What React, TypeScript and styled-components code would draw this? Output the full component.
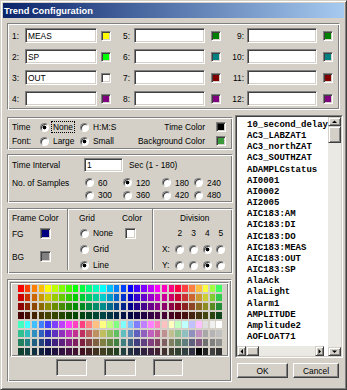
import React from "react";
import styled, { createGlobalStyle, css } from "styled-components";

const FACE = "#d4d0c8";
const SHADOW = "#808080";
const DARK = "#404040";
const LIGHT = "#ffffff";

const GlobalStyle = createGlobalStyle`
  *, *::before, *::after { box-sizing: border-box; }
  html, body { margin: 0; padding: 0; background: ${FACE}; }
  body {
    font-family: "Liberation Sans", Arial, sans-serif;
    font-size: 8.4px;
    color: #000;
  }
`;

const sunken = css`
  border: 1px solid;
  border-color: ${SHADOW} ${LIGHT} ${LIGHT} ${SHADOW};
  box-shadow: inset 1px 1px 0 ${DARK}, inset -1px -1px 0 ${FACE};
`;

const raised = css`
  border: 1px solid;
  border-color: ${FACE} ${DARK} ${DARK} ${FACE};
  box-shadow: inset 1px 1px 0 ${LIGHT}, inset -1px -1px 0 ${SHADOW};
  background: ${FACE};
`;

const etched = css`
  border: 1px solid;
  border-color: ${SHADOW} ${LIGHT} ${LIGHT} ${SHADOW};
  box-shadow: inset 1px 1px 0 ${LIGHT}, inset -1px -1px 0 ${SHADOW};
`;

const Window = styled.div`
  width: 347px;
  height: 390px;
  ${raised};
  padding: 2px;
  display: flex;
  flex-direction: column;
  overflow: hidden;
`;

const TitleBar = styled.div`
  height: 15px;
  flex: none;
  background: linear-gradient(to right, #0a246a, #a6caf0);
  color: #fff;
  font-weight: bold;
  font-size: 9.3px;
  display: flex;
  align-items: center;
  padding-left: 1px;
`;

const Body = styled.div`
  display: flex;
  flex-direction: column;
  padding: 5px 0 0 4px;
`;

/* ---------- channel group ---------- */
const ChannelGroup = styled.div`
  ${etched};
  width: 333px;
  padding: 4px 0 3px 1px;
  display: grid;
  grid-template-columns: 16px 72px 14px 23px 71px 16px 26px 70px 16px;
  grid-template-rows: repeat(4, 15px);
  row-gap: 6px;
`;

const ChLabel = styled.div<{ $left?: boolean; $pad: number }>`
  display: flex;
  align-items: center;
  justify-content: ${(p) => (p.$left ? "flex-start" : "flex-end")};
  padding-left: ${(p) => (p.$left ? p.$pad : 0)}px;
  padding-right: ${(p) => (p.$left ? 0 : p.$pad)}px;
`;

const TextField = styled.input<{ $w?: number }>`
  ${sunken};
  width: ${(p) => (p.$w ? `${p.$w}px` : "100%")};
  height: 100%;
  margin: 0;
  padding: 0 1px 0 2px;
  background: #fff;
  font: inherit;
  color: #000;
  outline: none;
`;

const SwatchCell = styled.div<{ $pl?: number }>`
  display: flex;
  align-items: center;
  justify-content: flex-end;
  padding-left: ${(p) => p.$pl ?? 0}px;
`;

const Swatch = styled.span<{ $c: string; $size?: number }>`
  display: block;
  flex: none;
  width: ${(p) => p.$size ?? 10}px;
  height: ${(p) => p.$size ?? 10}px;
  ${sunken};
  background: ${(p) => p.$c};
`;

/* ---------- lower area ---------- */
const Lower = styled.div`
  display: flex;
  gap: 2px;
  margin-top: 5px;
`;

const LeftCol = styled.div`
  width: 226px;
  display: flex;
  flex-direction: column;
  padding-top: 2px;
`;

const RightCol = styled.div`
  width: 108px;
  display: flex;
  flex-direction: column;
`;

const Text = styled.div<{ $pl?: number }>`
  display: flex;
  align-items: center;
  white-space: nowrap;
  padding-left: ${(p) => p.$pl ?? 0}px;
`;

const RightText = styled(Text)`
  justify-content: flex-end;
`;

const RadioOption = styled.div<{ $ml?: number }>`
  display: flex;
  align-items: center;
  gap: 4px;
  white-space: nowrap;
  margin-left: ${(p) => p.$ml ?? 0}px;
`;

const Radio = styled.span<{ $on?: boolean }>`
  display: block;
  flex: none;
  width: 9px;
  height: 9px;
  border-radius: 50%;
  border: 1px solid;
  border-color: ${SHADOW} ${LIGHT} ${LIGHT} ${SHADOW};
  box-shadow: inset 1px 1px 0 ${DARK};
  background: ${(p) =>
    p.$on ? "radial-gradient(circle at 50% 50%, #000 0 1.6px, #fff 2.2px)" : "#fff"};
`;

const Focus = styled.span`
  border: 1px dotted #000;
  padding: 0 1px;
  margin-left: -2px;
  line-height: 10px;
`;

const TimeGroup = styled.div`
  ${etched};
  height: 33px;
  padding: 2px 6px 0 4px;
  display: grid;
  grid-template-columns: 28px 40px 1fr auto 21px;
  grid-template-rows: 14px 14px;
`;

const IntervalGroup = styled.div`
  ${etched};
  height: 49px;
  margin-top: 4px;
  padding: 3px 0 0 4px;
  display: flex;
  flex-direction: column;
`;

const IntervalRow = styled.div<{ $h: number; $mb?: number }>`
  height: ${(p) => p.$h}px;
  margin-bottom: ${(p) => p.$mb ?? 0}px;
  display: grid;
  grid-template-columns: 72px 38px 39px 32px 1fr;
`;

const InputWithUnit = styled.div`
  grid-column: 2 / -1;
  display: flex;
  align-items: center;
  gap: 6px;
  height: 14px;
`;

const FrameGroup = styled.div`
  ${etched};
  height: 66px;
  margin-top: 5px;
  display: flex;
`;

const Section = styled.div<{ $w?: number; $sep?: boolean }>`
  ${(p) => (p.$w ? `width: ${p.$w}px;` : "flex: 1;")}
  margin-bottom: 3px;
  ${(p) =>
    p.$sep &&
    css`
      border-left: 1px solid ${SHADOW};
      box-shadow: inset 1px 0 0 ${LIGHT};
    `}
`;

const FrameSection = styled(Section)`
  display: flex;
  flex-direction: column;
  padding: 1px 0 0 4px;
`;

const SectionHead = styled(Text)`
  height: 15px;
`;

const FrameRow = styled.div<{ $mt: number }>`
  margin-top: ${(p) => p.$mt}px;
  height: 11px;
  display: grid;
  grid-template-columns: 28px 11px;
  align-items: center;
`;

const GridSection = styled(Section)`
  padding: 1px 0 0 11px;
  display: grid;
  grid-template-columns: 43px 1fr;
  grid-template-rows: 15px repeat(3, 16px);
`;

const DivisionSection = styled(Section)`
  padding-top: 1px;
  display: grid;
  grid-template-columns: 20px repeat(4, 13.7px);
  grid-template-rows: 15px repeat(3, 16px);
`;

const DivHead = styled(Text)`
  grid-column: 1 / -1;
  padding-left: 27px;
`;

const Center = styled.div`
  display: flex;
  align-items: center;
  justify-content: center;
`;

const PaletteGroup = styled.div`
  ${etched};
  width: 225px;
  height: 103px;
  margin-top: 5px;
  padding: 2px;
  display: flex;
  flex-direction: column;
`;

const PalettePanel = styled.div`
  ${etched};
  height: 75px;
  padding: 2px 0 0 7px;
`;

const PaletteGrid = styled.div`
  width: 205px;
  display: grid;
  grid-template-columns: repeat(30, 5.6px);
  grid-template-rows: repeat(8, 7px);
  column-gap: 1.25px;
  row-gap: 2px;
`;

const Cell = styled.span<{ $c: string }>`
  display: block;
  background: ${(p) => p.$c};
`;

const BoxRow = styled.div`
  display: flex;
  justify-content: center;
  gap: 17px;
  margin-top: 2px;
`;

const EmptyBox = styled.div<{ $w: number }>`
  ${sunken};
  width: ${(p) => p.$w}px;
  height: 17px;
`;

/* ---------- list box ---------- */
const ListOuter = styled.div`
  height: 243px;
  border: 1px solid;
  border-color: ${SHADOW} ${LIGHT} ${LIGHT} ${SHADOW};
  display: flex;
`;

const ListInner = styled.div`
  flex: 1;
  border: 1px solid;
  border-color: ${DARK} ${FACE} ${FACE} ${DARK};
  display: grid;
  grid-template-columns: 1fr 13px;
  grid-template-rows: 1fr 10px;
  background: #fff;
  min-width: 0;
`;

const Items = styled.div`
  grid-column: 1;
  grid-row: 1;
  overflow: hidden;
  padding: 3px 0 0 10px;
  font-family: "Liberation Mono", "Courier New", monospace;
  font-weight: bold;
  font-size: 9px;
  line-height: 11.15px;
  white-space: nowrap;
`;

const VScroll = styled.div`
  grid-column: 2;
  grid-row: 1 / span 2;
  display: flex;
  flex-direction: column;
  background: #ebe9e4;
`;

const HScroll = styled.div`
  grid-column: 1;
  grid-row: 2;
  display: flex;
  background: #ebe9e4;
  margin-right: 4px;
`;

const ScrollBtn = styled.div<{ $w?: number; $h?: number }>`
  ${raised};
  flex: none;
  width: ${(p) => (p.$w ? `${p.$w}px` : "auto")};
  height: ${(p) => (p.$h ? `${p.$h}px` : "auto")};
  display: flex;
  align-items: center;
  justify-content: center;
`;

const Track = styled.div`
  flex: 1;
`;

const ButtonRow = styled.div`
  display: flex;
  gap: 5px;
  margin-top: 5px;
  padding-left: 2px;
`;

const PushButton = styled.div<{ $w: number }>`
  width: ${(p) => p.$w}px;
  height: 15px;
  background: ${FACE};
  border: 1px solid;
  border-color: ${LIGHT} ${DARK} ${DARK} ${LIGHT};
  box-shadow: inset -1px -1px 0 ${SHADOW};
  display: flex;
  align-items: center;
  justify-content: center;
`;

/* ---------- helpers ---------- */
function Arrow({ dir }: { dir: "up" | "down" | "left" | "right" }) {
  const paths: Record<string, string> = {
    up: "M0 3 L2.5 0.5 L5 3 Z",
    down: "M0 0.5 L2.5 3 L5 0.5 Z",
    left: "M3 0 L0.5 2.5 L3 5 Z",
    right: "M0.5 0 L3 2.5 L0.5 5 Z",
  };
  const horiz = dir === "left" || dir === "right";
  return (
    <svg width={horiz ? 3.5 : 5} height={horiz ? 5 : 3.5} viewBox={horiz ? "0 0 3.5 5" : "0 0 5 3.5"}>
      <path d={paths[dir]} fill="#000" />
    </svg>
  );
}

function hsv(h: number, s: number, v: number): [number, number, number] {
  const f = (n: number) => {
    const k = (n + h / 60) % 6;
    return v - v * s * Math.max(0, Math.min(k, 4 - k, 1));
  };
  return [f(5) * 255, f(3) * 255, f(1) * 255];
}

function hexToRgb(hex: string): [number, number, number] {
  const n = parseInt(hex, 16);
  return [(n >> 16) & 255, (n >> 8) & 255, n & 255];
}

function rgbStr([r, g, b]: [number, number, number], k = 1) {
  return `rgb(${Math.round(r * k)},${Math.round(g * k)},${Math.round(b * k)})`;
}

const topExtra = ["ff4040", "ff8040", "ffc040", "ffff40", "a0ff40", "40ff60"];
const row5 = [
  "40ffc0", "40ffff", "40c0ff", "4080ff", "4040ff", "8040ff", "c040ff", "ff40ff", "ff40c0", "ff4080",
  "ff8080", "ffc080", "ffff80", "c0ff80", "80ff80", "80ffff", "80c0ff", "8080ff", "c080ff", "ff80ff",
  "ff80c0", "ffc0c0", "ffffc0", "c0ffc0", "c0ffff", "c0c0ff", "ffc0ff", "e0e0e0", "f0f0f0", "ffffff",
];
const tailOverrides: Record<number, string[]> = {
  5: ["c090c0", "a8a8a8", "b4b4b4", "c0c0c0"],
  6: ["805880", "707070", "808080", "909090"],
  7: ["000000", "202020", "404040", "303030"],
};

const palette: string[] = (() => {
  const out: string[] = [];
  const topV = [1, 0.8, 0.55, 0.27];
  for (let r = 0; r < 4; r++) {
    for (let c = 0; c < 30; c++) {
      if (c < 24) out.push(rgbStr(hsv(c * 15, 1, topV[r])));
      else out.push(rgbStr(hexToRgb(topExtra[c - 24]), topV[r]));
    }
  }
  const lowV = [1, 0.75, 0.5, 0.25];
  for (let r = 4; r < 8; r++) {
    for (let c = 0; c < 30; c++) {
      const ov = tailOverrides[r];
      if (ov && c >= 26) out.push("#" + ov[c - 26]);
      else out.push(rgbStr(hexToRgb(row5[c]), lowV[r - 4]));
    }
  }
  return out;
})();

const channelNames = ["MEAS", "SP", "OUT", "", "", "", "", "", "", "", "", ""];
const channelColors = [
  "#ffff00", "#00ff00", "#ffffff", "#800080",
  "#008000", "#008080", "#800000", "#800080",
  "#008000", "#008080", "#800000", "#800080",
];
const labelCfg = [
  { left: true, pad: 3 },
  { left: false, pad: 4 },
  { left: false, pad: 3 },
];

const tags = [
  "10_second_delay", "AC3_LABZAT1", "AC3_northZAT", "AC3_SOUTHZAT", "ADAMPLCstatus",
  "AI0001", "AI0002", "AI2005", "AIC183:AM", "AIC183:DI", "AIC183:DO", "AIC183:MEAS",
  "AIC183:OUT", "AIC183:SP", "AlaAck", "AlaLight", "Alarm1", "AMPLITUDE", "Amplitude2",
  "AOFLOAT71",
];

export default function App() {
  return (
    <>
      <GlobalStyle />
      <Window>
        <TitleBar>Trend Configuration</TitleBar>
        <Body>
          <ChannelGroup>
            {[0, 1, 2, 3].map((r) =>
              [0, 1, 2].map((c) => {
                const n = c * 4 + r;
                return (
                  <React.Fragment key={n}>
                    <ChLabel $left={labelCfg[c].left} $pad={labelCfg[c].pad}>
                      {n + 1}:
                    </ChLabel>
                    <TextField readOnly value={channelNames[n]} />
                    <SwatchCell>
                      <Swatch $c={channelColors[n]} />
                    </SwatchCell>
                  </React.Fragment>
                );
              })
            )}
          </ChannelGroup>

          <Lower>
            <LeftCol>
              <TimeGroup>
                <Text>Time</Text>
                <RadioOption>
                  <Radio $on />
                  <Focus>None</Focus>
                </RadioOption>
                <RadioOption>
                  <Radio />
                  <span>H:M:S</span>
                </RadioOption>
                <RightText>Time Color</RightText>
                <SwatchCell>
                  <Swatch $c="#000000" />
                </SwatchCell>
                <Text>Font:</Text>
                <RadioOption>
                  <Radio />
                  <span>Large</span>
                </RadioOption>
                <RadioOption>
                  <Radio $on />
                  <span>Small</span>
                </RadioOption>
                <RightText>Background Color</RightText>
                <SwatchCell>
                  <Swatch $c="#3a9a3a" />
                </SwatchCell>
              </TimeGroup>

              <IntervalGroup>
                <IntervalRow $h={14} $mb={4}>
                  <Text>Time Interval</Text>
                  <InputWithUnit>
                    <TextField readOnly value="1" $w={39} />
                    <span>Sec (1 - 180)</span>
                  </InputWithUnit>
                </IntervalRow>
                <IntervalRow $h={13}>
                  <Text>No. of Samples</Text>
                  {["60", "120", "180", "240"].map((v) => (
                    <RadioOption key={v} $ml={1}>
                      <Radio $on={v === "120"} />
                      <span>{v}</span>
                    </RadioOption>
                  ))}
                </IntervalRow>
                <IntervalRow $h={12}>
                  <span />
                  {["300", "360", "420", "480"].map((v) => (
                    <RadioOption key={v} $ml={1}>
                      <Radio />
                      <span>{v}</span>
                    </RadioOption>
                  ))}
                </IntervalRow>
              </IntervalGroup>

              <FrameGroup>
                <FrameSection $w={59}>
                  <SectionHead>Frame Color</SectionHead>
                  <FrameRow $mt={3}>
                    <Text>FG</Text>
                    <Swatch $c="#000080" $size={11} />
                  </FrameRow>
                  <FrameRow $mt={12}>
                    <Text>BG</Text>
                    <Swatch $c="#808080" $size={11} />
                  </FrameRow>
                </FrameSection>

                <GridSection $w={85} $sep>
                  <SectionHead>Grid</SectionHead>
                  <SectionHead>Color</SectionHead>
                  <RadioOption $ml={1}>
                    <Radio />
                    <span>None</span>
                  </RadioOption>
                  <SwatchCell $pl={3} style={{ justifyContent: "flex-start" }}>
                    <Swatch $c="#ffffff" $size={11} />
                  </SwatchCell>
                  <RadioOption $ml={1}>
                    <Radio />
                    <span>Grid</span>
                  </RadioOption>
                  <span />
                  <RadioOption $ml={1}>
                    <Radio $on />
                    <span>Line</span>
                  </RadioOption>
                  <span />
                </GridSection>

                <DivisionSection $sep>
                  <DivHead>Division</DivHead>
                  <span />
                  {["2", "3", "4", "5"].map((d) => (
                    <Center key={d}>{d}</Center>
                  ))}
                  <Text $pl={9}>X:</Text>
                  {[0, 1, 2, 3].map((i) => (
                    <Center key={i}>
                      <Radio $on={i === 2} />
                    </Center>
                  ))}
                  <Text $pl={9}>Y:</Text>
                  {[0, 1, 2, 3].map((i) => (
                    <Center key={i}>
                      <Radio $on={i === 2} />
                    </Center>
                  ))}
                </DivisionSection>
              </FrameGroup>

              <PaletteGroup>
                <PalettePanel>
                  <PaletteGrid>
                    {palette.map((c, i) => (
                      <Cell key={i} $c={c} />
                    ))}
                  </PaletteGrid>
                </PalettePanel>
                <BoxRow>
                  <EmptyBox $w={31} />
                  <EmptyBox $w={32} />
                  <EmptyBox $w={30} />
                </BoxRow>
              </PaletteGroup>
            </LeftCol>

            <RightCol>
              <ListOuter>
                <ListInner>
                  <Items>
                    {tags.map((t) => (
                      <div key={t}>{t}</div>
                    ))}
                  </Items>
                  <VScroll>
                    <ScrollBtn $h={9}>
                      <Arrow dir="up" />
                    </ScrollBtn>
                    <ScrollBtn $h={17} />
                    <Track />
                    <ScrollBtn $h={9}>
                      <Arrow dir="down" />
                    </ScrollBtn>
                  </VScroll>
                  <HScroll>
                    <ScrollBtn $w={9}>
                      <Arrow dir="left" />
                    </ScrollBtn>
                    <ScrollBtn $w={13} />
                    <Track />
                    <ScrollBtn $w={9}>
                      <Arrow dir="right" />
                    </ScrollBtn>
                  </HScroll>
                </ListInner>
              </ListOuter>
              <ButtonRow>
                <PushButton $w={51}>OK</PushButton>
                <PushButton $w={46}>Cancel</PushButton>
              </ButtonRow>
            </RightCol>
          </Lower>
        </Body>
      </Window>
    </>
  );
}
